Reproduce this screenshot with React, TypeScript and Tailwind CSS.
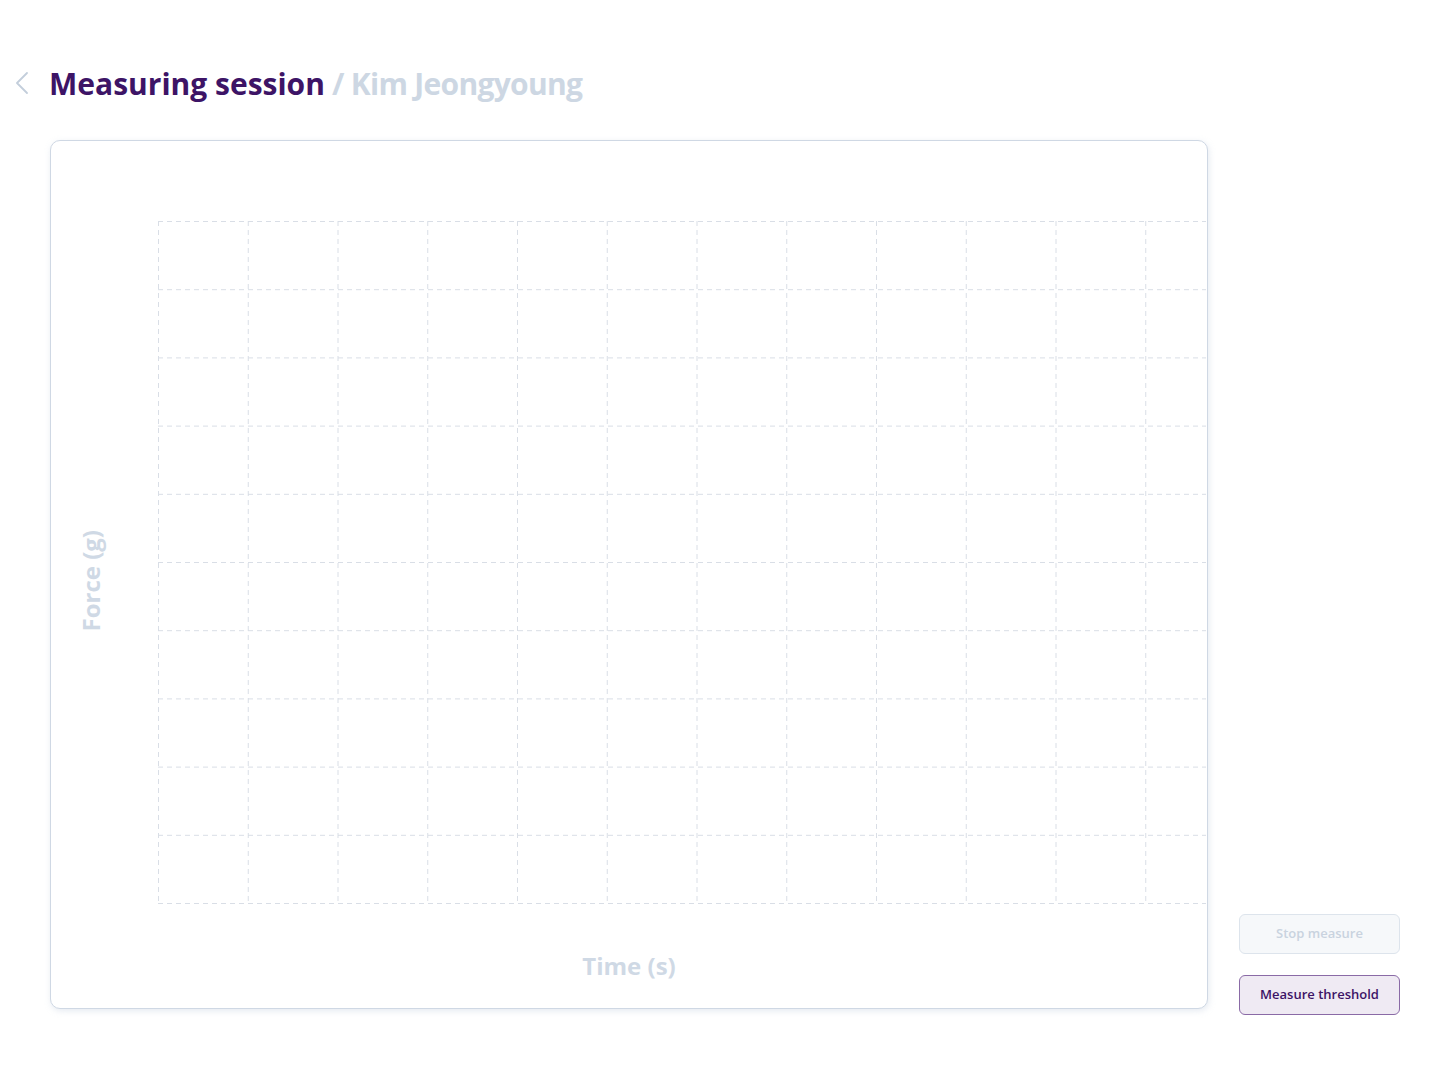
import { ChevronLeft } from "lucide-react";

const COLS = 12;
const ROWS = 10;
const GRID_W = 1048;
const GRID_H = 683;
const COL_W = 89.75;
const ROW_H = 68.2;

function ChartGrid() {
  const xs = Array.from({ length: COLS }, (_, i) => 0.5 + i * COL_W);
  const ys = Array.from({ length: ROWS + 1 }, (_, i) => 0.5 + i * ROW_H);
  return (
    <svg width={GRID_W} height={GRID_H} className="block">
      {xs.map((x) => (
        <line key={`v${x}`} x1={x} y1={0} x2={x} y2={GRID_H} stroke="#d9dee6" strokeWidth={1} strokeDasharray="5 4" />
      ))}
      {ys.map((y) => (
        <line key={`h${y}`} x1={0} y1={y} x2={GRID_W} y2={y} stroke="#d9dee6" strokeWidth={1} strokeDasharray="5 4" />
      ))}
    </svg>
  );
}

export default function App() {
  return (
    <div className="min-h-screen w-full bg-white font-['Open_Sans',sans-serif]">
      <header className="flex items-center pt-[62px] pl-[2px] h-[104px]">
        <ChevronLeft className="text-[#c3cedb]" size={40} strokeWidth={1.1} />
        <h1 className="ml-[7px] text-[30px] font-bold text-[#3d1466]">
          Measuring session
          <span className="tracking-[-0.7px] text-[#cdd7e3]"> / Kim Jeongyoung</span>
        </h1>
      </header>

      <main className="flex items-end pl-[50px] pt-[36px]">
        <section className="w-[1158px] h-[869px] rounded-[10px] border border-[#cfd8e4] bg-white shadow-[1px_2px_6px_rgba(180,195,215,0.35)] overflow-hidden flex flex-col">
          <div className="flex pt-[80px]">
            <div className="w-[107px] flex items-center justify-start pl-[22px] pt-[36px]">
              <span className="[writing-mode:vertical-rl] rotate-180 text-[24px] font-bold text-[#cfd9e5]">Force (g)</span>
            </div>
            <ChartGrid />
          </div>
          <div className="flex justify-center pt-[44px]">
            <span className="text-[24px] font-bold text-[#cfd9e5]">Time (s)</span>
          </div>
        </section>

        <div className="ml-[31px] mb-[-6px] flex flex-col gap-[21px]">
          <button className="w-[161px] h-[40px] rounded-[6px] border border-[#dde4ec] bg-[#f6f8fa] text-[13px] font-semibold text-[#c9d3df]">
            Stop measure
          </button>
          <button className="w-[161px] h-[40px] rounded-[6px] border border-[#8a6aa6] bg-[#efeaf3] text-[13px] font-semibold text-[#3d1466]">
            Measure threshold
          </button>
        </div>
      </main>
    </div>
  );
}
